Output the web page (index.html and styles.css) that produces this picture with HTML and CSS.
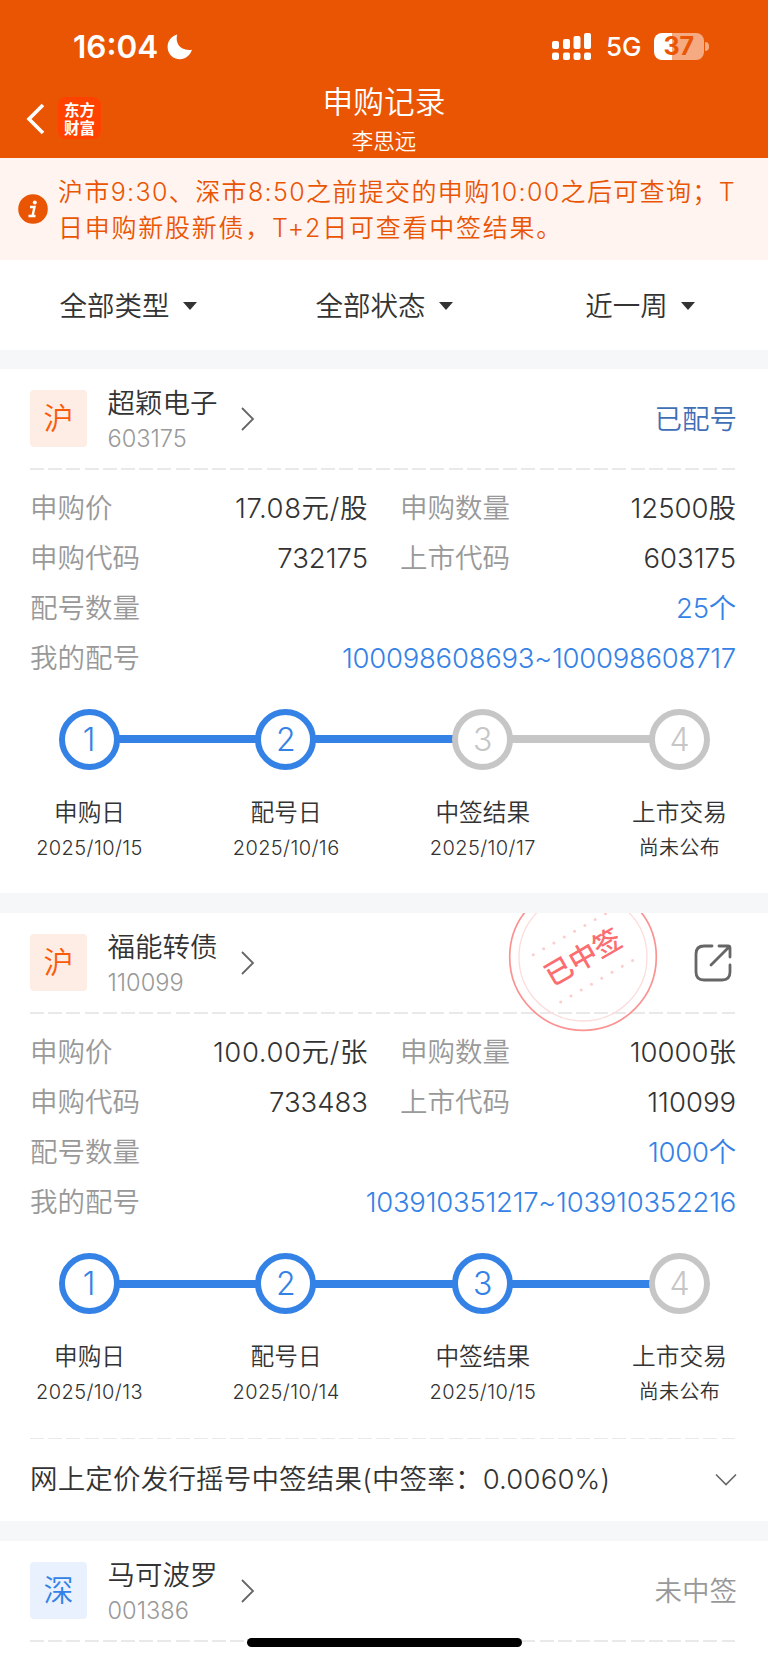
FILE: index.html
```
<!DOCTYPE html>
<html lang="zh-CN">
<head>
<meta charset="utf-8">
<title>申购记录</title>
<link rel="stylesheet" href="styles.css">
</head>
<body>
<div class="header">
	<div class="status">
		<span class="time">16:04</span>
		<svg class="moon" width="26" height="26" viewBox="0 0 26 26"><path d="M10.2 .6C8 8.500 12.500 17.500 25 15.800C23 21.500 18.500 25.200 13 25.200C6 25.200 .6 19.800 .6 12.900C.6 7 4.500 2 10.200 .6z" fill="#fff"/></svg>
		<svg class="signal" width="40" height="28" viewBox="0 0 40 28" fill="#fff">
			<rect x="0" y="8" width="7" height="8" rx="2"/><rect x="11" y="6" width="7" height="10" rx="2"/><rect x="21.500" y="3" width="7" height="13" rx="2"/><rect x="32" y="0" width="7" height="16" rx="2"/>
			<rect x="0" y="19.500" width="7" height="7.500" rx="2"/><rect x="11" y="19.500" width="7" height="7.500" rx="2"/><rect x="21.500" y="19.500" width="7" height="7.500" rx="2"/><rect x="32" y="19.500" width="7" height="7.500" rx="2"/>
		</svg>
		<span class="net">5G</span>
		<span class="battery">37</span>
		<span class="nub"></span>
	</div>
	<div class="nav">
		<svg class="back" width="20" height="34" viewBox="0 0 20 34"><path d="M17 3L3 17l14 14" fill="none" stroke="#fff" stroke-width="3.600"/></svg>
		<div class="logo">东方<br>财富</div>
		<div class="title">
			<h1>申购记录</h1>
			<p>李思远</p>
		</div>
	</div>
</div>
<div class="notice">
	<svg width="30" height="30" viewBox="0 0 30 30"><circle cx="15" cy="15" r="14.800" fill="#ea5504"/><circle cx="16.800" cy="8.600" r="2" fill="#fff"/><path d="M12 13h4.500l-2 9M10.500 22h7" fill="none" stroke="#fff" stroke-width="2.400"/></svg>
	<p>沪市9:30、深市8:50之前提交的申购10:00之后可查询；T<br><span>日申购新股新债，T+2日可查看中签结果。</span></p>
</div>
<div class="filter">
	<div>全部类型<i></i></div>
	<div>全部状态<i></i></div>
	<div>近一周<i></i></div>
</div>

<div class="card">
	<div class="head">
		<span class="tag">沪</span>
		<div class="name"><b>超颖电子</b><span>603175</span></div>
		<svg class="arrow" width="14" height="24" viewBox="0 0 14 24"><path d="M1 1l11 11L1 23" fill="none" stroke="#666" stroke-width="1.800"/></svg>
		<span class="state blue">已配号</span>
	</div>
	<div class="dash"></div>
	<div class="info">
		<dl><dt>申购价</dt><dd class="price">17.08元/股</dd></dl>
		<dl><dt>申购数量</dt><dd>12500股</dd></dl>
		<dl><dt>申购代码</dt><dd>732175</dd></dl>
		<dl><dt>上市代码</dt><dd>603175</dd></dl>
		<dl class="wide"><dt>配号数量</dt><dd>25个</dd></dl>
		<dl class="wide"><dt>我的配号</dt><dd>100098608693~100098608717</dd></dl>
	</div>
	<div class="steps"><em class="on">1</em><i class="on"></i><em class="on">2</em><i class="on"></i><em>3</em><i></i><em>4</em></div>
	<div class="days">
		<div><b>申购日</b><span>2025/10/15</span></div>
		<div><b>配号日</b><span>2025/10/16</span></div>
		<div><b>中签结果</b><span>2025/10/17</span></div>
		<div><b>上市交易</b><span>尚未公布</span></div>
	</div>
</div>

<div class="card">
	<svg class="stamp" width="150" height="150" viewBox="-75 -75 150 150">
		<circle r="73.300" fill="none" stroke="#fb9393" stroke-width="1.700"/>
		<circle r="64" fill="none" stroke="#fddcdc" stroke-width="1.300"/>
		<path d="M-49.700-2.300L22.800-43.500M-22.300 45L50.200 3" fill="none" stroke="#fdcccc" stroke-width="3" stroke-linecap="round" stroke-dasharray="0 11.860"/>
		<text transform="rotate(-30)" y="10" text-anchor="middle">已中签</text>
	</svg>
	<div class="head">
		<span class="tag">沪</span>
		<div class="name"><b>福能转债</b><span>110099</span></div>
		<svg class="arrow" width="14" height="24" viewBox="0 0 14 24"><path d="M1 1l11 11L1 23" fill="none" stroke="#666" stroke-width="1.800"/></svg>
		<svg class="share" width="38" height="38" viewBox="0 0 38 38" fill="none" stroke="#666" stroke-width="2.800" stroke-linecap="round"><path d="M18 2H10Q2 2 2 10V28Q2 36 10 36H28Q36 36 36 28V21M25 2H34Q36 2 36 4V13M35 3L17 21"/></svg>
	</div>
	<div class="dash"></div>
	<div class="info">
		<dl><dt>申购价</dt><dd class="price">100.00元/张</dd></dl>
		<dl><dt>申购数量</dt><dd>10000张</dd></dl>
		<dl><dt>申购代码</dt><dd>733483</dd></dl>
		<dl><dt>上市代码</dt><dd>110099</dd></dl>
		<dl class="wide"><dt>配号数量</dt><dd>1000个</dd></dl>
		<dl class="wide"><dt>我的配号</dt><dd>103910351217~103910352216</dd></dl>
	</div>
	<div class="steps"><em class="on">1</em><i class="on"></i><em class="on">2</em><i class="on"></i><em class="on">3</em><i class="on"></i><em>4</em></div>
	<div class="days">
		<div><b>申购日</b><span>2025/10/13</span></div>
		<div><b>配号日</b><span>2025/10/14</span></div>
		<div><b>中签结果</b><span>2025/10/15</span></div>
		<div><b>上市交易</b><span>尚未公布</span></div>
	</div>
	<div class="dash"></div>
	<div class="result">
		<span>网上定价发行摇号中签结果(中签率：0.0060%)</span>
		<svg width="22" height="14" viewBox="0 0 22 14"><path d="M1 1.500l10 10 10-10" fill="none" stroke="#666" stroke-width="1.600"/></svg>
	</div>
</div>

<div class="card last">
	<div class="head">
		<span class="tag sz">深</span>
		<div class="name"><b>马可波罗</b><span>001386</span></div>
		<svg class="arrow" width="14" height="24" viewBox="0 0 14 24"><path d="M1 1l11 11L1 23" fill="none" stroke="#666" stroke-width="1.800"/></svg>
		<span class="state">未中签</span>
	</div>
	<div class="dash"></div>
</div>
<div class="home"></div>
</body>
</html>
```
FILE: styles.css
```
html, body {height:1662px;margin:0;padding:0;overflow:hidden;}
body {width:768px;background:#f6f7f9;color:#333;font:350 27.5px/36px Inter, "Noto Sans CJK SC", sans-serif;white-space:nowrap;position:relative;}
h1, p, dl, dt, dd {margin:0;padding:0;}
b, em, i, h1 {font-weight:inherit;font-style:normal;}
svg {display:block;flex:none;}

.header {height:158px;background:#ea5504;color:#fff;}
.status {height:92px;display:flex;align-items:center;padding:1px 59px 0 73px;box-sizing:border-box;}
.time {width:95px;font-weight:600;font-size:31.500px;}
.signal {margin-left:359px;}
.net {margin-left:14px;width:48px;font-weight:450;font-size:26px;}
.battery {width:51px;height:27px;border-radius:8px;background:linear-gradient(90deg, #fff 18px, #f5aa82 18px);color:#ea5504;font:700 25px/27px Inter, sans-serif;text-align:center;}
.nub {width:4px;height:9px;margin-left:1px;border-radius:0 5px 5px 0;background:#f5aa82;}
.nav {display:grid;grid-template-columns:32px 45px 1fr 103px;padding-left:26px;height:66px;}
.back {margin-top:10px;}
.logo {width:43px;height:42px;margin-top:5px;border-radius:8px;background:#ff4200;font:700 15.500px/18px "Noto Sans CJK SC", sans-serif;text-align:center;padding-top:3px;box-sizing:border-box;}
.title {text-align:center;}
.title h1 {font-size:30.700px;line-height:36px;margin-top:-8px;}
.title p {font-size:21.500px;line-height:30px;margin-top:6px;}

.notice {height:102px;background:#fff4ef;color:#ea5504;display:flex;align-items:center;padding:0 0 0 18px;gap:10px;box-sizing:border-box;}
.notice p {font-size:25px;letter-spacing:1.360px;padding-top:2px;}
.notice p span {letter-spacing:1.750px;}
.filter {height:90px;background:#fff;display:flex;padding-top:2px;box-sizing:border-box;}
.filter div {flex:1;display:flex;align-items:center;justify-content:center;gap:13px;}
.filter i {border:7px solid transparent;border-top:8px solid #333;border-bottom:0;}

.card {margin:19px 0 20px;background:#fff;position:relative;overflow:hidden;}
.card + .card {margin-top:0;}
.head {height:99px;padding:0 31px 0 30px;display:flex;align-items:center;box-sizing:border-box;}
.tag {width:57px;height:57px;border-radius:4px;background:#fdede5;color:#fb5a0b;font-size:30px;line-height:57px;text-align:center;}
.tag.sz {background:#e8f1fd;color:#3482e6;}
.name {width:133px;margin-left:20.500px;padding-top:4px;}
.name b, .name span {display:block;}
.name span {color:#999;font-size:23.600px;}
.state, .share {margin-left:auto;color:#999;}
.state {padding-top:1px;}
.share {margin-right:5px;}
.state.blue {color:#3f6fb5;}
.dash {height:1.500px;margin:0 33px 0 30px;background:repeating-linear-gradient(90deg, #e9e9e9 0 14px, transparent 14px 18.200px);}
.info {display:grid;grid-template-columns:338px 336px;column-gap:32px;padding:13px 31px 0 30px;}
.info dl {display:flex;justify-content:space-between;height:50.200px;line-height:50.200px;}
.info dt {color:#999;}
.info .price {letter-spacing:.600px;}
.info .wide {grid-column:1 / 3;}
.info .wide dd {color:#3482e6;letter-spacing:-.250px;}

.steps {display:flex;align-items:center;padding:25.500px 58px 0 58.500px;}
.steps em {width:61px;height:61px;border:6px solid #c6c6c6;border-radius:50%;box-sizing:border-box;color:#c6c6c6;font-size:32px;line-height:50px;font-weight:300;text-align:center;}
.steps i {flex:1;height:8px;margin:0 -1px;background:#c6c6c6;}
.steps em.on {border-color:#3482e6;color:#3482e6;}
.steps i.on {background:#3482e6;}
.days {display:flex;justify-content:space-between;height:123.500px;padding:25px 28.500px 0 29.500px;box-sizing:border-box;text-align:center;}
.days div {width:120px;}
.days b, .days span {display:block;font-size:23.700px;}
.days span {font-size:20px;line-height:34px;letter-spacing:.400px;}

.result {height:82px;padding:0 31px 0 30px;display:flex;align-items:center;justify-content:space-between;box-sizing:border-box;}
.result span {letter-spacing:.180px;padding-bottom:3px;}
.result svg {margin-bottom:1px;}
.last {height:121px;}
.stamp {position:absolute;left:508px;top:-31px;}
.stamp text {font:500 28px "Noto Sans CJK SC", sans-serif;fill:#fb6d70;}
.home {position:absolute;left:247px;top:1638px;width:275px;height:9px;border-radius:5px;background:#000;}
```
